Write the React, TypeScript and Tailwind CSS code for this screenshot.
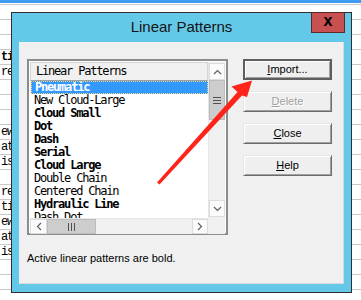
import React from "react";

const mono = { fontFamily: '"DejaVu Sans Mono", "Liberation Mono", monospace' };
const sheetMono = { fontFamily: '"Liberation Mono", "DejaVu Sans Mono", monospace' };
const sans = { fontFamily: '"Liberation Sans", Arial, sans-serif' };

// background sheet rows peeking out left of the dialog
const sheetRows: Record<number, { text: string; bold?: boolean }> = {
  3: { text: "ti", bold: true },
  4: { text: "re" },
  8: { text: "ew" },
  9: { text: "atu" },
  10: { text: "is" },
  12: { text: "re" },
  13: { text: "ti" },
  14: { text: "ew" },
  15: { text: "atu" },
  16: { text: "is" },
};

const items = [
  { name: "Pneumatic", bold: true },
  { name: "New Cloud-Large", bold: false },
  { name: "Cloud Small", bold: true },
  { name: "Dot", bold: true },
  { name: "Dash", bold: true },
  { name: "Serial", bold: true },
  { name: "Cloud Large", bold: true },
  { name: "Double Chain", bold: false },
  { name: "Centered Chain", bold: false },
  { name: "Hydraulic Line", bold: true },
  { name: "Dash Dot", bold: false },
];

const Button = ({
  label,
  accel,
  isDefault = false,
  disabled = false,
}: {
  label: string;
  accel: number;
  isDefault?: boolean;
  disabled?: boolean;
}) => (
  <div
    className={`w-[89px] h-[21px] flex items-center justify-center bg-[#efefef] text-[11px] ${
      isDefault
        ? "border-2 border-[#5e5e5e] shadow-[inset_1px_1px_0_#ffffff,inset_-1px_-1px_0_#a0a0a0]"
        : "border border-t-[#e6e6e6] border-l-[#e6e6e6] border-r-[#6d6d6d] border-b-[#6d6d6d] shadow-[inset_1px_1px_0_#ffffff,inset_-1px_-1px_0_#a0a0a0]"
    } ${disabled ? "text-[#a0a0a0] [text-shadow:1px_1px_0_#ffffff]" : "text-black"}`}
    style={sans}
  >
    {label.slice(0, accel)}
    <span className="underline underline-offset-1">{label[accel]}</span>
    {label.slice(accel + 1)}
  </div>
);

export default function App() {
  return (
    <div className="relative w-[361px] h-[300px] overflow-hidden bg-white">
      {/* desktop / sheet behind */}
      <div className="h-[3px] bg-[#3d9bf2]" />
      <div className="h-px" />
      <div className="flex flex-col">
        {Array.from({ length: 20 }).map((_, k) => (
          <div
            key={k}
            className={`h-[15px] border-t border-[#c8c8c8] pl-px text-[12px] leading-[14px] tracking-[-1.2px] text-black ${
              sheetRows[k]?.bold ? "font-bold" : ""
            }`}
            style={sheetMono}
          >
            {sheetRows[k]?.text ?? ""}
          </div>
        ))}
      </div>

      {/* dialog window */}
      <div className="absolute left-[11px] top-[12px] w-[341px] h-[281px] border border-[#2f2f2f] bg-[#64c9e8] flex flex-col">
        <div className="relative h-[29px] flex items-center justify-center pb-[1px]">
          <span className="text-[15px] text-[#141414]" style={sans}>
            Linear Patterns
          </span>
          <div className="absolute -top-px right-[6px] w-[34px] h-[21px] bg-[#c75050] border border-[#5a2a2a] flex items-center justify-center">
            <span className="text-[16px] font-bold leading-none -mt-[3px] text-black" style={sans}>
              x
            </span>
          </div>
        </div>

        <div className="ml-[7px] mr-[7px] h-[242px] bg-[#f0f0f0] border-b border-r border-[#d9d9d9] pt-[17px] pl-[8px]">
          <div className="flex gap-[15px]">
            {/* list box */}
            <div className="w-[201px] h-[176px] border-2 border-[#8c8c8c] bg-white p-px">
              <div className="grid grid-cols-[178px_17px] grid-rows-[156px_16px] h-full">
                <div className="flex flex-col overflow-hidden">
                  <div
                    className="h-[19px] shrink-0 bg-[#f0f0f0] border border-[#d5d5d5] border-b-[#a0a0a0] pl-[5px] text-[12px] leading-[17px] tracking-[-1.2px] text-black"
                    style={mono}
                  >
                    Linear Patterns
                  </div>
                  {items.map((it, i) => (
                    <div
                      key={it.name}
                      className={`h-[13px] shrink-0 pl-[4px] text-[12px] leading-[13px] tracking-[-1.2px] whitespace-nowrap ${
                        it.bold ? "font-bold" : ""
                      } ${
                        i === 0
                          ? "ml-px bg-[#3399ff] text-white outline-1 outline-dotted outline-[#f3d87a] -outline-offset-1"
                          : "text-black"
                      }`}
                      style={mono}
                    >
                      {it.name}
                    </div>
                  ))}
                </div>

                {/* vertical scrollbar */}
                <div className="flex flex-col bg-[#f0f0f0] border-l border-[#e6e6e6]">
                  <div className="h-[17px] mt-px bg-[#fbfbfb] border border-[#dcdcdc] flex items-center justify-center">
                    <svg width="9" height="6" viewBox="0 0 9 6">
                      <path d="M1 5 L4.5 1.5 L8 5" fill="none" stroke="#606060" strokeWidth="1.2" />
                    </svg>
                  </div>
                  <div className="h-[40px] bg-[#cdcdcd] border border-[#bcbcbc] flex flex-col items-center justify-center gap-[2px]">
                    <div className="w-[8px] h-px bg-[#505050]" />
                    <div className="w-[8px] h-px bg-[#505050]" />
                    <div className="w-[8px] h-px bg-[#505050]" />
                  </div>
                  <div className="flex-1" />
                  <div className="h-[17px] mb-px bg-[#fbfbfb] border border-[#dcdcdc] flex items-center justify-center">
                    <svg width="9" height="6" viewBox="0 0 9 6">
                      <path d="M1 1 L4.5 4.5 L8 1" fill="none" stroke="#606060" strokeWidth="1.2" />
                    </svg>
                  </div>
                </div>

                {/* horizontal scrollbar */}
                <div className="flex bg-[#f0f0f0] border-t border-[#e6e6e6]">
                  <div className="w-[17px] bg-[#fbfbfb] border border-[#dcdcdc] flex items-center justify-center">
                    <svg width="6" height="9" viewBox="0 0 6 9">
                      <path d="M5 1 L1.5 4.5 L5 8" fill="none" stroke="#606060" strokeWidth="1.2" />
                    </svg>
                  </div>
                  <div className="w-[49px] bg-[#cdcdcd] border border-[#bcbcbc] flex items-center justify-center gap-[2px]">
                    <div className="w-px h-[8px] bg-[#505050]" />
                    <div className="w-px h-[8px] bg-[#505050]" />
                    <div className="w-px h-[8px] bg-[#505050]" />
                  </div>
                  <div className="flex-1" />
                  <div className="w-[16px] bg-[#fbfbfb] border border-[#dcdcdc] flex items-center justify-center">
                    <svg width="6" height="9" viewBox="0 0 6 9">
                      <path d="M1 1 L4.5 4.5 L1 8" fill="none" stroke="#606060" strokeWidth="1.2" />
                    </svg>
                  </div>
                </div>
                <div className="bg-[#f0f0f0]" />
              </div>
            </div>

            {/* buttons */}
            <div className="flex flex-col gap-[11px]">
              <Button label="Import..." accel={0} isDefault />
              <Button label="Delete" accel={0} disabled />
              <Button label="Close" accel={0} />
              <Button label="Help" accel={0} />
            </div>
          </div>

          <div className="mt-[17px] text-[11px] leading-[13px] text-black" style={sans}>
            Active linear patterns are bold.
          </div>
        </div>
      </div>

      {/* red annotation arrow */}
      <svg
        className="absolute left-0 top-0 pointer-events-none"
        width="361"
        height="300"
        viewBox="0 0 361 300"
      >
        <polygon
          points="157,182.5 237.5,92 231.5,86.5 252,80.5 247,97 242,95.5 159.5,184.5"
          fill="#ff2419"
        />
      </svg>
    </div>
  );
}
